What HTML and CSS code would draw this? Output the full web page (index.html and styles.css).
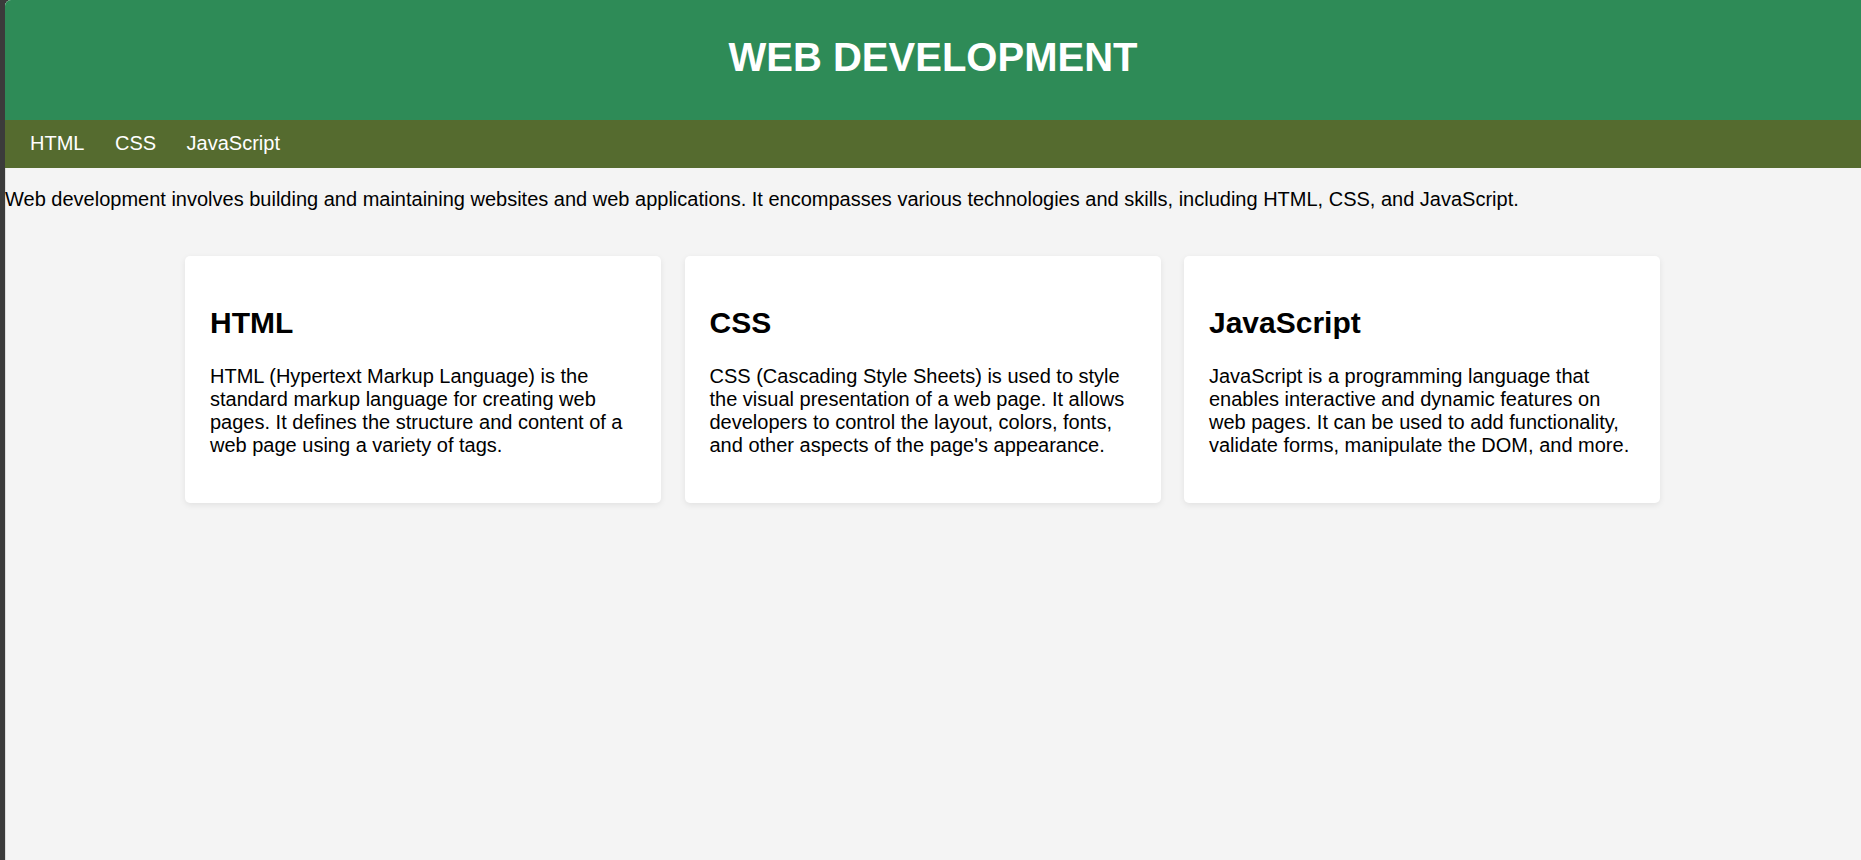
FILE: index.html
```html
<!DOCTYPE html>
<html lang="en">
<head>
<meta charset="utf-8">
<title>Web Development</title>
<link rel="stylesheet" href="styles.css">
</head>
<body>
<div class="page">
  <header class="site-header">
    <h1 class="site-title">WEB DEVELOPMENT</h1>
  </header>
  <nav class="site-nav">
    <a class="nav-link" href="#html">HTML</a>
    <a class="nav-link" href="#css">CSS</a>
    <a class="nav-link" href="#js">JavaScript</a>
  </nav>
  <p class="intro">Web development involves building and maintaining websites and web applications. It encompasses various technologies and skills, including HTML, CSS, and JavaScript.</p>
  <main class="cards">
    <section class="card" id="html">
      <h2 class="card-title">HTML</h2>
      <p class="card-text">HTML (Hypertext Markup Language) is the standard markup language for creating web pages. It defines the structure and content of a web page using a variety of tags.</p>
    </section>
    <section class="card" id="css">
      <h2 class="card-title">CSS</h2>
      <p class="card-text">CSS (Cascading Style Sheets) is used to style the visual presentation of a web page. It allows developers to control the layout, colors, fonts, and other aspects of the page's appearance.</p>
    </section>
    <section class="card" id="js">
      <h2 class="card-title">JavaScript</h2>
      <p class="card-text">JavaScript is a programming language that enables interactive and dynamic features on web pages. It can be used to add functionality, validate forms, manipulate the DOM, and more.</p>
    </section>
  </main>
</div>
</body>
</html>
```
FILE: styles.css
```css
html, body {
  margin: 0;
  padding: 0;
  height: 100%;
}

body {
  background: #3b3b3b;
  font-family: "Liberation Sans", Arial, sans-serif;
  font-size: 20px;
  color: #000;
  overflow: hidden;
}

.page {
  margin-left: 5px;
  min-height: 860px;
  background: #f4f4f4;
  border-top-left-radius: 6px;
  overflow: hidden;
  box-shadow: inset 1px 0 0 #dcdcdc;
}

.site-header {
  background: #2e8b57;
  height: 120px;
  box-sizing: border-box;
  padding-top: 34px;
  text-align: center;
}

.site-title {
  margin: 0;
  color: #fff;
  font-size: 40px;
  font-weight: bold;
  line-height: 46px;
}

.site-nav {
  background: #556b2f;
  height: 48px;
  box-sizing: border-box;
  padding: 11.5px 12.5px 13.5px;
  display: flex;
  gap: 5.5px;
  line-height: 23px;
}

.nav-link {
  color: #fff;
  text-decoration: none;
  padding: 0 12.5px;
}

.intro {
  margin: 20px 0;
  line-height: 23px;
}

.cards {
  display: flex;
  justify-content: center;
  gap: 23.5px;
  padding: 25px 21px 25px 0;
}

.card {
  width: 476px;
  box-sizing: border-box;
  background: #fff;
  border-radius: 5px;
  padding: 25px;
  box-shadow: 0 2px 6px rgba(0, 0, 0, 0.08);
}

.card-title {
  font-size: 30px;
  font-weight: bold;
  margin: 25px 0 24.5px;
  line-height: 34.5px;
}

.card-text {
  margin: 20px 0 20.5px;
  line-height: 23px;
}
```
